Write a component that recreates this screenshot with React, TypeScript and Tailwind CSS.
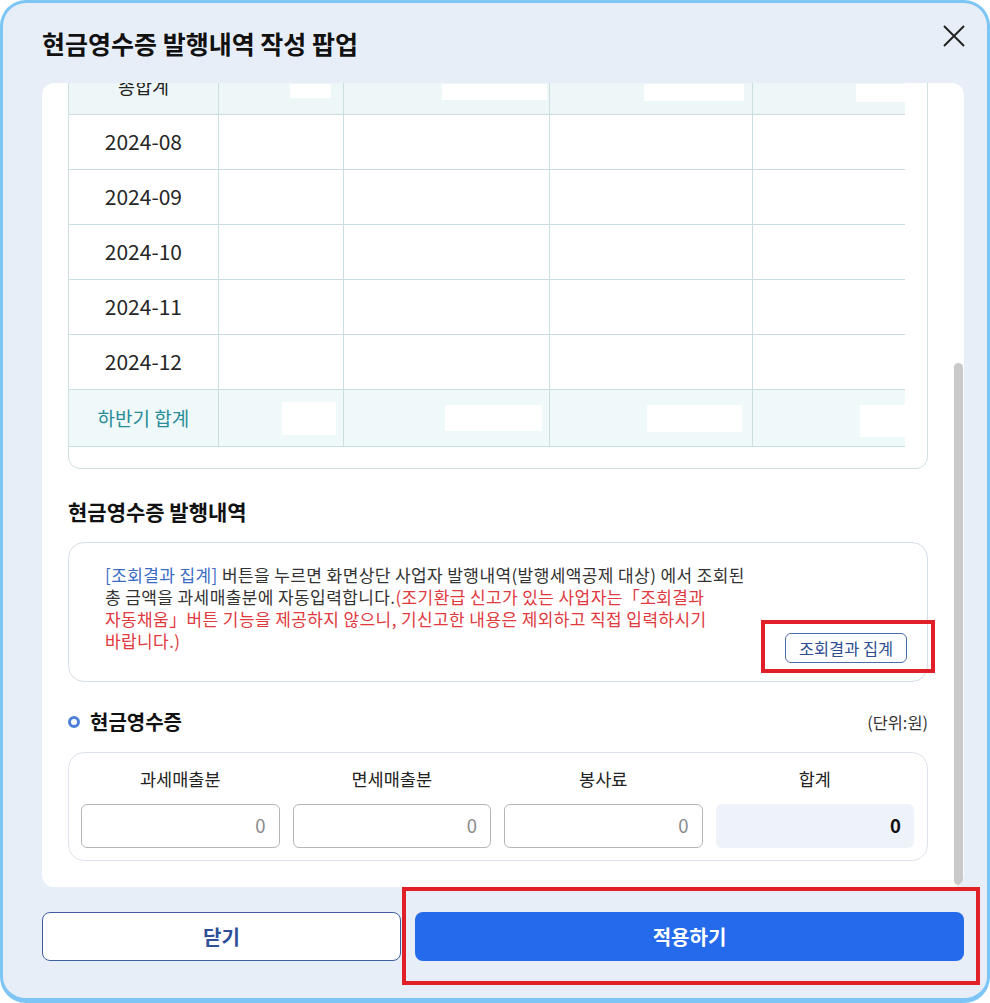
import React from "react";

const font = "font-['Noto_Sans_CJK_KR','Noto_Sans',sans-serif]";

const rows = ["2024-08", "2024-09", "2024-10", "2024-11", "2024-12"];

function Cell({ w, children, last, className = "" }: { w: string; children?: React.ReactNode; last?: boolean; className?: string }) {
  return (
    <div className={`${w} h-full flex items-center ${last ? "" : "border-r border-[#c9dee1]"} ${className}`}>{children}</div>
  );
}

export default function App() {
  return (
    <div className={`w-[990px] h-[1003px] bg-white ${font}`}>
      <div className="h-full rounded-[26px] border-[3px] border-b-[5px] border-[#7dc5f4] bg-[#e8eef8] pl-[39px] pr-[23px] flex flex-col">
        {/* Title */}
        <div className="h-[80px] flex items-center justify-between shrink-0">
          <h1 className="text-[25px] font-bold text-[#111] leading-none">현금영수증 발행내역 작성 팝업</h1>
          <svg className="-mt-[14px] mr-[-2px]" width="24" height="24" viewBox="0 0 24 24" fill="none">
            <path d="M2 2 L22 22 M22 2 L2 22" stroke="#222" strokeWidth="2" />
          </svg>
        </div>

        {/* Panel */}
        <div className="h-[804px] bg-white rounded-[12px] flex shrink-0 overflow-hidden">
          <div className="flex-1 pl-[26px] pr-[26px] overflow-hidden">
            <div className="-mt-[24px]">
              {/* Table box */}
              <div className="h-[410px] border border-[#cfe0e3] rounded-b-[12px]">
                <div className="w-[837px] -ml-px">
                  {/* header */}
                  <div className="h-[55px] flex bg-[#edf7f7] border-b border-[#c9dee1] border-l border-l-[#cfe0e3]">
                    <Cell w="w-[150px]" className="justify-center text-[18.5px] text-[#222]">종합계</Cell>
                    <Cell w="w-[125px]" className="justify-end pr-[12px] pt-[8px]"><span className="w-[41px] h-[14px] bg-white" /></Cell>
                    <Cell w="w-[207px]" className="justify-end pr-[2px] pt-[10px]"><span className="w-[105px] h-[16px] bg-white" /></Cell>
                    <Cell w="w-[203px]" className="justify-end pr-[8px] pt-[10px]"><span className="w-[100px] h-[17px] bg-white" /></Cell>
                    <Cell w="w-[152px]" last className="justify-end pt-[12px]"><span className="w-[49px] h-[18px] bg-white" /></Cell>
                  </div>
                  {rows.map((r) => (
                    <div key={r} className="h-[55px] flex border-b border-[#c9dee1] border-l border-l-[#cfe0e3]">
                      <Cell w="w-[150px]" className="justify-center text-[21px] text-[#262626]">{r}</Cell>
                      <Cell w="w-[125px]" />
                      <Cell w="w-[207px]" />
                      <Cell w="w-[203px]" />
                      <Cell w="w-[152px]" last />
                    </div>
                  ))}
                  <div className="h-[57px] flex bg-[#f0f9fa] border-b border-[#c9dee1] border-l border-l-[#cfe0e3]">
                    <Cell w="w-[150px]" className="justify-center text-[19px] text-[#2a8c98]">하반기 합계</Cell>
                    <Cell w="w-[125px]" className="justify-end pr-[7px]"><span className="w-[54px] h-[33px] bg-white" /></Cell>
                    <Cell w="w-[207px]" className="justify-end pr-[7px]"><span className="w-[97px] h-[26px] bg-white" /></Cell>
                    <Cell w="w-[203px]" className="justify-end pr-[10px]"><span className="w-[95px] h-[27px] bg-white" /></Cell>
                    <Cell w="w-[152px]" last className="justify-end pt-[6px]"><span className="w-[45px] h-[32px] bg-white" /></Cell>
                  </div>
                </div>
              </div>

              {/* 현금영수증 발행내역 */}
              <h2 className="mt-[28px] h-[28px] leading-[28px] text-[21px] font-bold text-[#111]">현금영수증 발행내역</h2>

              <div className="mt-[17px] h-[140px] border border-[#d5dde8] rounded-[16px] pl-[36px] pr-[20px] pt-[21px] pb-[18px] flex justify-between items-end">
                <p className="self-start text-[17px] tracking-[0.4px] leading-[22px] text-[#333] whitespace-nowrap">
                  <span className="text-[#3b6cc4]">[조회결과 집계]</span> 버튼을 누르면 화면상단 사업자 발행내역(발행세액공제 대상) 에서 조회된
                  <br />
                  총 금액을 과세매출분에 자동입력합니다.
                  <span className="text-[#e0393e]">
                    (조기환급 신고가 있는 사업자는「조회결과
                    <br />
                    자동채움」버튼 기능을 제공하지 않으니, 기신고한 내용은 제외하고 직접 입력하시기
                    <br />
                    바랍니다.)
                  </span>
                </p>
                <div className="relative">
                  <button className="w-[122px] h-[30px] border border-[#4a6fa8] rounded-[6px] text-[16.4px] text-[#2d4f8f] bg-white leading-none">
                    조회결과 집계
                  </button>
                  <div className="absolute -left-[24px] -right-[28px] -top-[13px] -bottom-[10px] border-[4px] border-[#e01f28] pointer-events-none" />
                </div>
              </div>

              {/* 현금영수증 section */}
              <div className="mt-[27px] h-[26px] flex items-center justify-between">
                <div className="flex items-center gap-[10px]">
                  <span className="w-[12px] h-[12px] rounded-full border-[3px] border-[#4d80d8]" />
                  <span className="text-[20px] font-bold text-[#111]">현금영수증</span>
                </div>
                <span className="text-[16.4px] text-[#333]">(단위:원)</span>
              </div>

              <div className="mt-[17px] h-[109px] border border-[#dde3ea] rounded-[16px] pl-[12px] pr-[13px] pt-[15px]">
                <div className="grid grid-cols-4 gap-x-[13px]">
                  {["과세매출분", "면세매출분", "봉사료", "합계"].map((l) => (
                    <div key={l} className="h-[22px] leading-[22px] text-center text-[17.5px] text-[#222]">{l}</div>
                  ))}
                  {[0, 1, 2].map((i) => (
                    <div key={i} className="mt-[14px] h-[44px] border border-[#b5b5b5] rounded-[6px] flex items-center justify-end pr-[13px] text-[18.5px] text-[#8a8a8a]">0</div>
                  ))}
                  <div className="mt-[14px] h-[44px] rounded-[6px] bg-[#eef2f9] flex items-center justify-end pr-[13px] text-[18.5px] font-bold text-[#111]">0</div>
                </div>
              </div>
            </div>
          </div>
          {/* scrollbar */}
          <div className="w-[10px] pr-[1px] pt-[280px] pb-[2px] flex">
            <div className="w-[9px] h-full rounded-full bg-[#c9c9c9]" />
          </div>
        </div>

        {/* Buttons */}
        <div className="mt-[25px] flex gap-[14px] shrink-0">
          <button className="w-[359px] h-[49px] rounded-[8px] border border-[#3d5f9e] bg-white text-[20px] font-semibold text-[#2f4f99]">닫기</button>
          <div className="relative flex-1">
            <button className="w-full h-[49px] rounded-[8px] bg-[#256aea] text-[20px] font-bold text-white">적용하기</button>
            <div className="absolute -left-[13px] -right-[16px] -top-[25px] -bottom-[24px] border-[4px] border-[#e01f28] pointer-events-none" />
          </div>
        </div>
      </div>
    </div>
  );
}
